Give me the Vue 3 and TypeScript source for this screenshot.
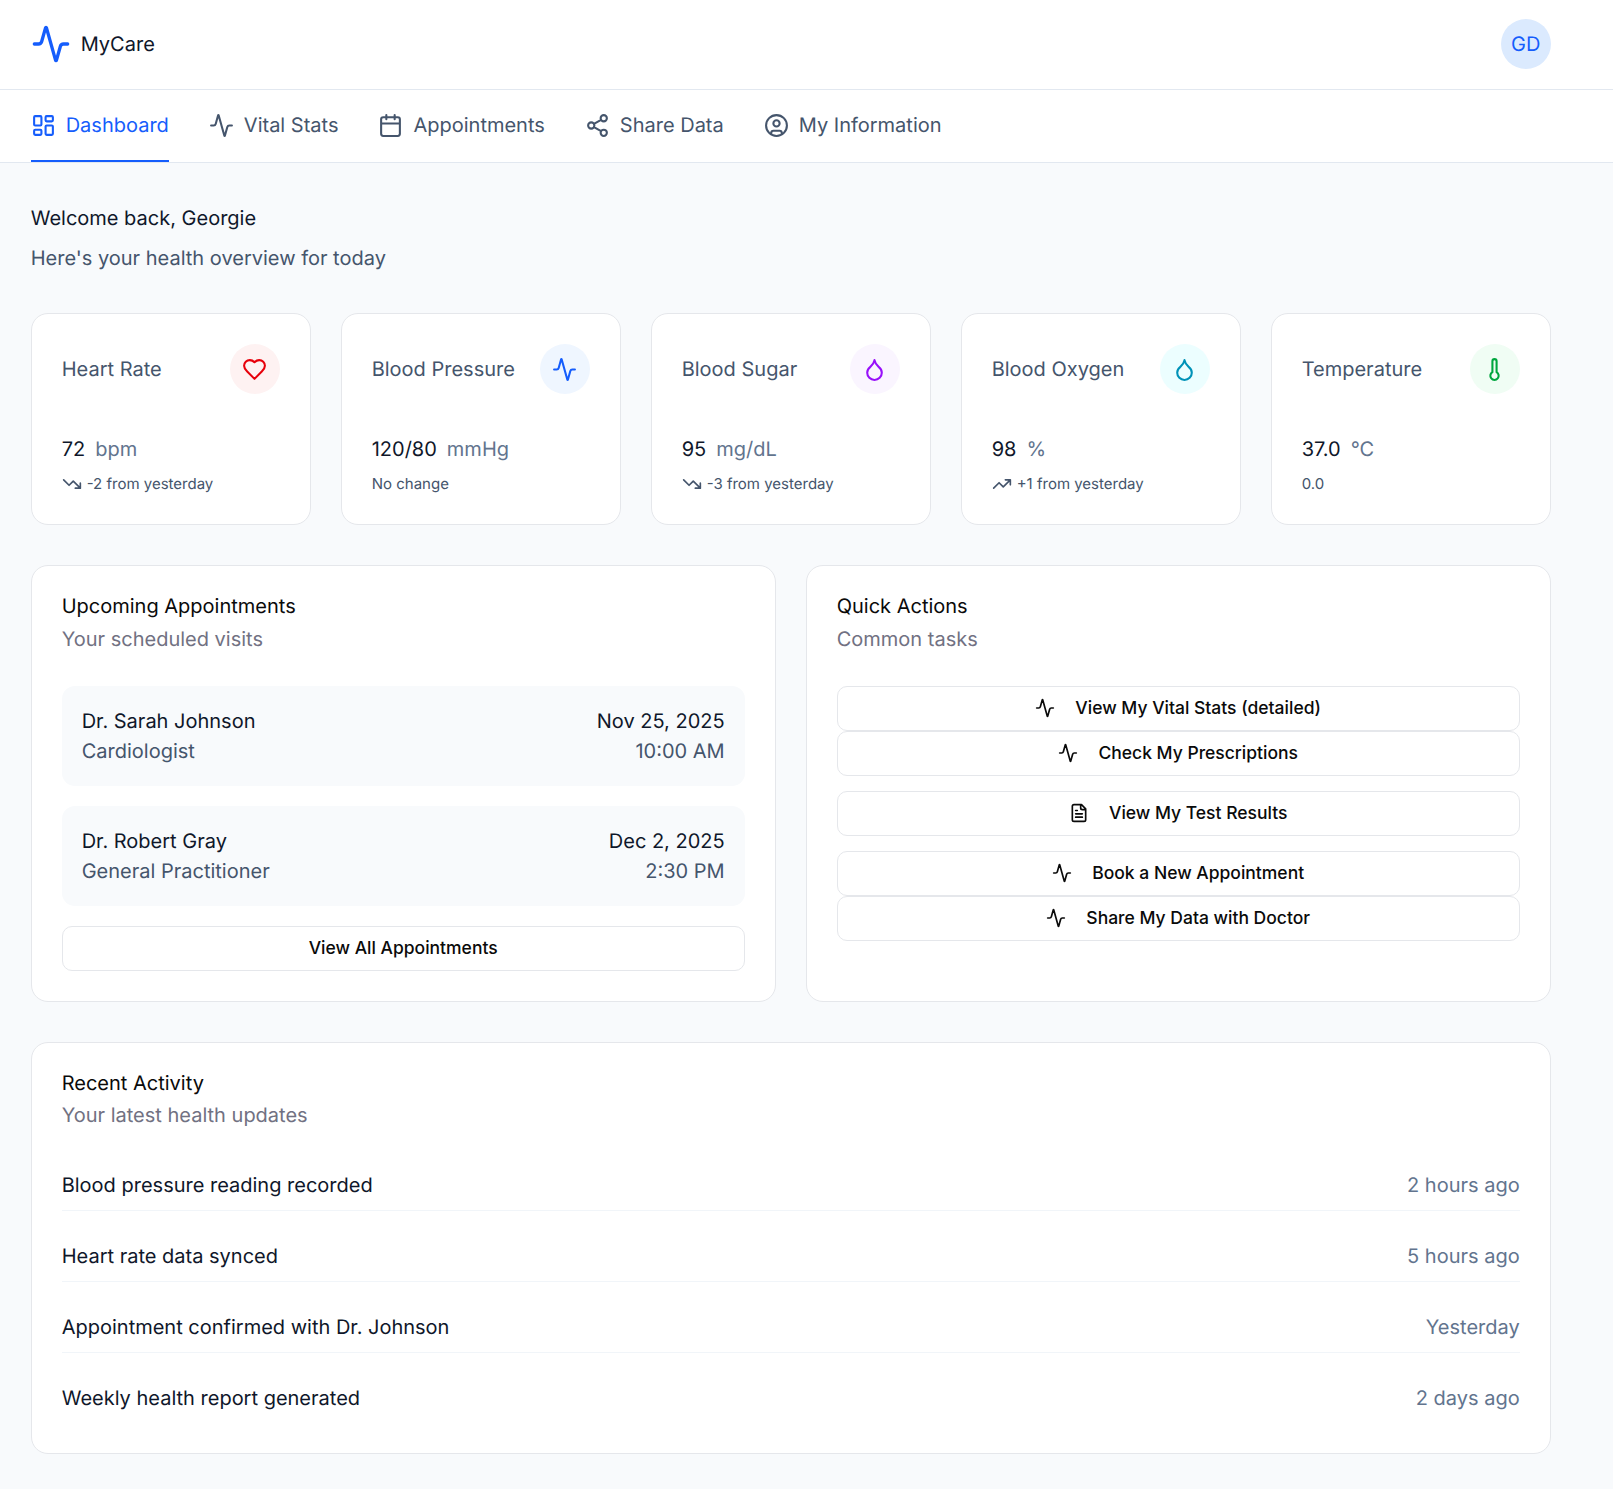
<template>
  <div class="page">
    <header class="topbar">
      <div class="brand">
        <svg class="brand-icon" viewBox="0 0 24 24"><path :d="icons.activity" /></svg>
        <span class="brand-name">MyCare</span>
      </div>
      <div class="avatar">GD</div>
    </header>

    <nav class="tabs">
      <a v-for="tab in tabs" :key="tab.label" class="tab" :class="{ active: tab.active }">
        <svg class="tab-icon" viewBox="0 0 24 24"><path :d="icons[tab.icon]" /></svg>
        <span>{{ tab.label }}</span>
      </a>
    </nav>

    <main class="content">
      <section class="welcome">
        <h1>Welcome back, Georgie</h1>
        <p>Here's your health overview for today</p>
      </section>

      <section class="stats">
        <div v-for="stat in stats" :key="stat.title" class="card stat">
          <div class="stat-head">
            <span class="stat-title">{{ stat.title }}</span>
            <span class="stat-badge" :class="stat.tone">
              <svg class="badge-icon" viewBox="0 0 24 24"><path :d="icons[stat.icon]" /></svg>
            </span>
          </div>
          <div class="stat-value">
            <span class="num">{{ stat.value }}</span>
            <span class="unit">{{ stat.unit }}</span>
          </div>
          <div class="stat-note">
            <svg v-if="stat.trend" class="trend-icon" viewBox="0 0 24 24"><path :d="icons[stat.trend]" /></svg>
            <span>{{ stat.note }}</span>
          </div>
        </div>
      </section>

      <section class="columns">
        <div class="card panel">
          <h2>Upcoming Appointments</h2>
          <p class="panel-sub">Your scheduled visits</p>
          <div class="appts">
            <div v-for="a in appointments" :key="a.doctor" class="appt">
              <div>
                <div class="appt-main">{{ a.doctor }}</div>
                <div class="appt-sub">{{ a.role }}</div>
              </div>
              <div class="appt-when">
                <div class="appt-main">{{ a.date }}</div>
                <div class="appt-sub">{{ a.time }}</div>
              </div>
            </div>
            <button class="btn">View All Appointments</button>
          </div>
        </div>

        <div class="card panel">
          <h2>Quick Actions</h2>
          <p class="panel-sub">Common tasks</p>
          <div class="actions">
            <button v-for="q in actions" :key="q.label" class="btn action" :class="{ spaced: q.spaced }">
              <svg class="action-icon" viewBox="0 0 24 24"><path :d="icons[q.icon]" /></svg>
              <span>{{ q.label }}</span>
            </button>
          </div>
        </div>
      </section>

      <section class="card panel recent">
        <h2>Recent Activity</h2>
        <p class="panel-sub">Your latest health updates</p>
        <ul class="feed">
          <li v-for="item in activity" :key="item.text">
            <span>{{ item.text }}</span>
            <span class="when">{{ item.when }}</span>
          </li>
        </ul>
      </section>
    </main>
  </div>
</template>

<script setup lang="ts">
const icons: Record<string, string> = {
  activity: 'M22 12h-2.48a2 2 0 0 0-1.93 1.46l-2.35 8.36a.25.25 0 0 1-.48 0L9.24 2.18a.25.25 0 0 0-.48 0l-2.35 8.36A2 2 0 0 1 4.49 12H2',
  dashboard: 'M4 3h5a1 1 0 0 1 1 1v7a1 1 0 0 1-1 1H4a1 1 0 0 1-1-1V4a1 1 0 0 1 1-1z M15 3h5a1 1 0 0 1 1 1v3a1 1 0 0 1-1 1h-5a1 1 0 0 1-1-1V4a1 1 0 0 1 1-1z M15 12h5a1 1 0 0 1 1 1v7a1 1 0 0 1-1 1h-5a1 1 0 0 1-1-1v-7a1 1 0 0 1 1-1z M4 16h5a1 1 0 0 1 1 1v3a1 1 0 0 1-1 1H4a1 1 0 0 1-1-1v-3a1 1 0 0 1 1-1z',
  calendar: 'M8 2v4 M16 2v4 M5 4h14a2 2 0 0 1 2 2v14a2 2 0 0 1-2 2H5a2 2 0 0 1-2-2V6a2 2 0 0 1 2-2z M3 10h18',
  share: 'M21 5a3 3 0 1 1-6 0a3 3 0 1 1 6 0 M9 12a3 3 0 1 1-6 0a3 3 0 1 1 6 0 M21 19a3 3 0 1 1-6 0a3 3 0 1 1 6 0 M8.59 13.51l6.83 3.98 M15.41 6.51l-6.82 3.98',
  user: 'M22 12a10 10 0 1 1-20 0a10 10 0 1 1 20 0 M15 10a3 3 0 1 1-6 0a3 3 0 1 1 6 0 M7 20.662V19a2 2 0 0 1 2-2h6a2 2 0 0 1 2 2v1.662',
  heart: 'M19 14c1.49-1.46 3-3.21 3-5.5A5.5 5.5 0 0 0 16.5 3c-1.76 0-3 .5-4.5 2-1.5-1.5-2.74-2-4.5-2A5.5 5.5 0 0 0 2 8.5c0 2.3 1.5 4.05 3 5.5l7 7Z',
  droplet: 'M12 22a7 7 0 0 0 7-7c0-2-1-3.9-3-5.5s-3.5-4-4-6.5c-.5 2.5-2 4.9-4 6.5C6 11.1 5 13 5 15a7 7 0 0 0 7 7z',
  thermometer: 'M14 4v10.54a4 4 0 1 1-4 0V4a2 2 0 0 1 4 0Z',
  down: 'M16 17h6v-6 M22 17l-8.5-8.5-5 5L2 7',
  up: 'M16 7h6v6 M22 7l-8.5 8.5-5-5L2 17',
  file: 'M15 2H6a2 2 0 0 0-2 2v16a2 2 0 0 0 2 2h12a2 2 0 0 0 2-2V7Z M14 2v4a2 2 0 0 0 2 2h4 M10 9H8 M16 13H8 M16 17H8'
}

const tabs = [
  { label: 'Dashboard', icon: 'dashboard', active: true },
  { label: 'Vital Stats', icon: 'activity' },
  { label: 'Appointments', icon: 'calendar' },
  { label: 'Share Data', icon: 'share' },
  { label: 'My Information', icon: 'user' }
]

const stats = [
  { title: 'Heart Rate', icon: 'heart', tone: 'red', value: '72', unit: 'bpm', note: '-2 from yesterday', trend: 'down' },
  { title: 'Blood Pressure', icon: 'activity', tone: 'blue', value: '120/80', unit: 'mmHg', note: 'No change' },
  { title: 'Blood Sugar', icon: 'droplet', tone: 'purple', value: '95', unit: 'mg/dL', note: '-3 from yesterday', trend: 'down' },
  { title: 'Blood Oxygen', icon: 'droplet', tone: 'cyan', value: '98', unit: '%', note: '+1 from yesterday', trend: 'up' },
  { title: 'Temperature', icon: 'thermometer', tone: 'green', value: '37.0', unit: '°C', note: '0.0' }
]

const appointments = [
  { doctor: 'Dr. Sarah Johnson', role: 'Cardiologist', date: 'Nov 25, 2025', time: '10:00 AM' },
  { doctor: 'Dr. Robert Gray', role: 'General Practitioner', date: 'Dec 2, 2025', time: '2:30 PM' }
]

const actions = [
  { label: 'View My Vital Stats (detailed)', icon: 'activity' },
  { label: 'Check My Prescriptions', icon: 'activity' },
  { label: 'View My Test Results', icon: 'file', spaced: true },
  { label: 'Book a New Appointment', icon: 'activity', spaced: true },
  { label: 'Share My Data with Doctor', icon: 'activity' }
]

const activity = [
  { text: 'Blood pressure reading recorded', when: '2 hours ago' },
  { text: 'Heart rate data synced', when: '5 hours ago' },
  { text: 'Appointment confirmed with Dr. Johnson', when: 'Yesterday' },
  { text: 'Weekly health report generated', when: '2 days ago' }
]
</script>

<style>
body {
  background: #f8fafc;
}
</style>

<style scoped>
.page {
  min-height: 1489px;
  background: #f8fafc;
  color: #0f172a;
  font-family: Inter, "Noto Sans", sans-serif;
  font-size: 20px;
  line-height: 30px;
  text-rendering: geometricPrecision;
}

svg {
  display: block;
  flex: none;
  fill: none;
  stroke: currentColor;
  stroke-width: 2;
  stroke-linecap: round;
  stroke-linejoin: round;
}

.topbar {
  height: 90px;
  box-sizing: border-box;
  display: flex;
  align-items: center;
  justify-content: space-between;
  padding: 0 62.3px 1px 30.7px;
  background: #fff;
  border-bottom: 1px solid #e2e8f0;
}

.brand {
  display: flex;
  align-items: center;
  gap: 10px;
}

.brand-icon {
  width: 40px;
  height: 40px;
  color: #155dfc;
}

.avatar {
  width: 50px;
  height: 50px;
  border-radius: 50%;
  display: flex;
  align-items: center;
  justify-content: center;
  background: #dbeafe;
  color: #155dfc;
}

.tabs {
  height: 73px;
  box-sizing: border-box;
  display: flex;
  gap: 40px;
  padding: 0 30.7px;
  background: #fff;
  border-bottom: 1px solid #e2e8f0;
}

.tab {
  display: flex;
  align-items: center;
  gap: 10px;
  height: 72px;
  box-sizing: border-box;
  color: #45556c;
  border-bottom: 2px solid transparent;
}

.tab.active {
  color: #155dfc;
  border-bottom-color: #155dfc;
}

.tab-icon {
  width: 25px;
  height: 25px;
}

.content {
  padding: 40px 62.3px 36px 30.7px;
}

.welcome h1 {
  margin: 0;
  font-size: 20px;
  font-weight: 400;
  line-height: 30px;
}

.welcome p {
  margin: 10px 0 0;
  color: #45556c;
}

.stats {
  display: grid;
  grid-template-columns: repeat(5, 1fr);
  gap: 30px;
  margin-top: 40px;
}

.card {
  box-sizing: border-box;
  background: #fff;
  border: 1px solid #e5e7eb;
  border-radius: 17px;
}

.stat {
  height: 212px;
  padding: 30px;
}

.stat-head {
  display: flex;
  align-items: center;
  justify-content: space-between;
}

.stat-title {
  color: #45556c;
}

.stat-badge {
  width: 50px;
  height: 50px;
  border-radius: 50%;
  display: flex;
  align-items: center;
  justify-content: center;
}

.badge-icon {
  width: 25px;
  height: 25px;
}

.red { background: #fef2f2; color: #e7000b; }
.blue { background: #eff6ff; color: #155dfc; }
.purple { background: #faf5ff; color: #9810fa; }
.cyan { background: #ecfeff; color: #0092b8; }
.green { background: #f0fdf4; color: #00a63e; }

.stat-value {
  display: flex;
  gap: 10px;
  margin-top: 40px;
}

.unit {
  color: #62748e;
}

.stat-note {
  display: flex;
  align-items: center;
  gap: 5px;
  margin-top: 7px;
  font-size: 15px;
  line-height: 25px;
  color: #45556c;
}

.trend-icon {
  width: 20px;
  height: 20px;
}

.columns {
  display: grid;
  grid-template-columns: 1fr 1fr;
  gap: 30px;
  margin-top: 40px;
}

.panel {
  padding: 30px;
}

.panel h2 {
  margin: 0;
  font-size: 20px;
  font-weight: 400;
  line-height: 21px;
  color: #0a0a0a;
}

.panel-sub {
  margin: 7px 0 0;
  color: #717182;
}

.recent .panel-sub {
  margin-top: 6px;
}

.appts {
  display: flex;
  flex-direction: column;
  gap: 20px;
  margin-top: 32px;
}

.appt {
  display: flex;
  justify-content: space-between;
  padding: 20px;
  border-radius: 13px;
  background: #f8fafc;
}

.appt-when {
  text-align: right;
}

.appt-sub {
  color: #45556c;
}

.btn {
  height: 45px;
  width: 100%;
  display: flex;
  align-items: center;
  justify-content: center;
  gap: 20px;
  box-sizing: border-box;
  padding: 0 0 2px;
  background: #fff;
  border: 1px solid #e5e7eb;
  border-radius: 10px;
  color: #0a0a0a;
  font: 500 17.5px/25px Inter, "Noto Sans", sans-serif;
}

.actions {
  margin-top: 32px;
}

.action.spaced {
  margin-top: 15px;
}

.action-icon {
  width: 20px;
  height: 20px;
}

.recent {
  margin-top: 40px;
}

.feed {
  list-style: none;
  margin: 40px 0 0;
  padding: 0;
  display: flex;
  flex-direction: column;
  gap: 30px;
}

.feed li {
  display: flex;
  justify-content: space-between;
  padding-bottom: 10px;
  border-bottom: 1px solid #f1f5f9;
}

.feed li:last-child {
  border-bottom: 0;
}

.when {
  color: #62748e;
}
</style>
